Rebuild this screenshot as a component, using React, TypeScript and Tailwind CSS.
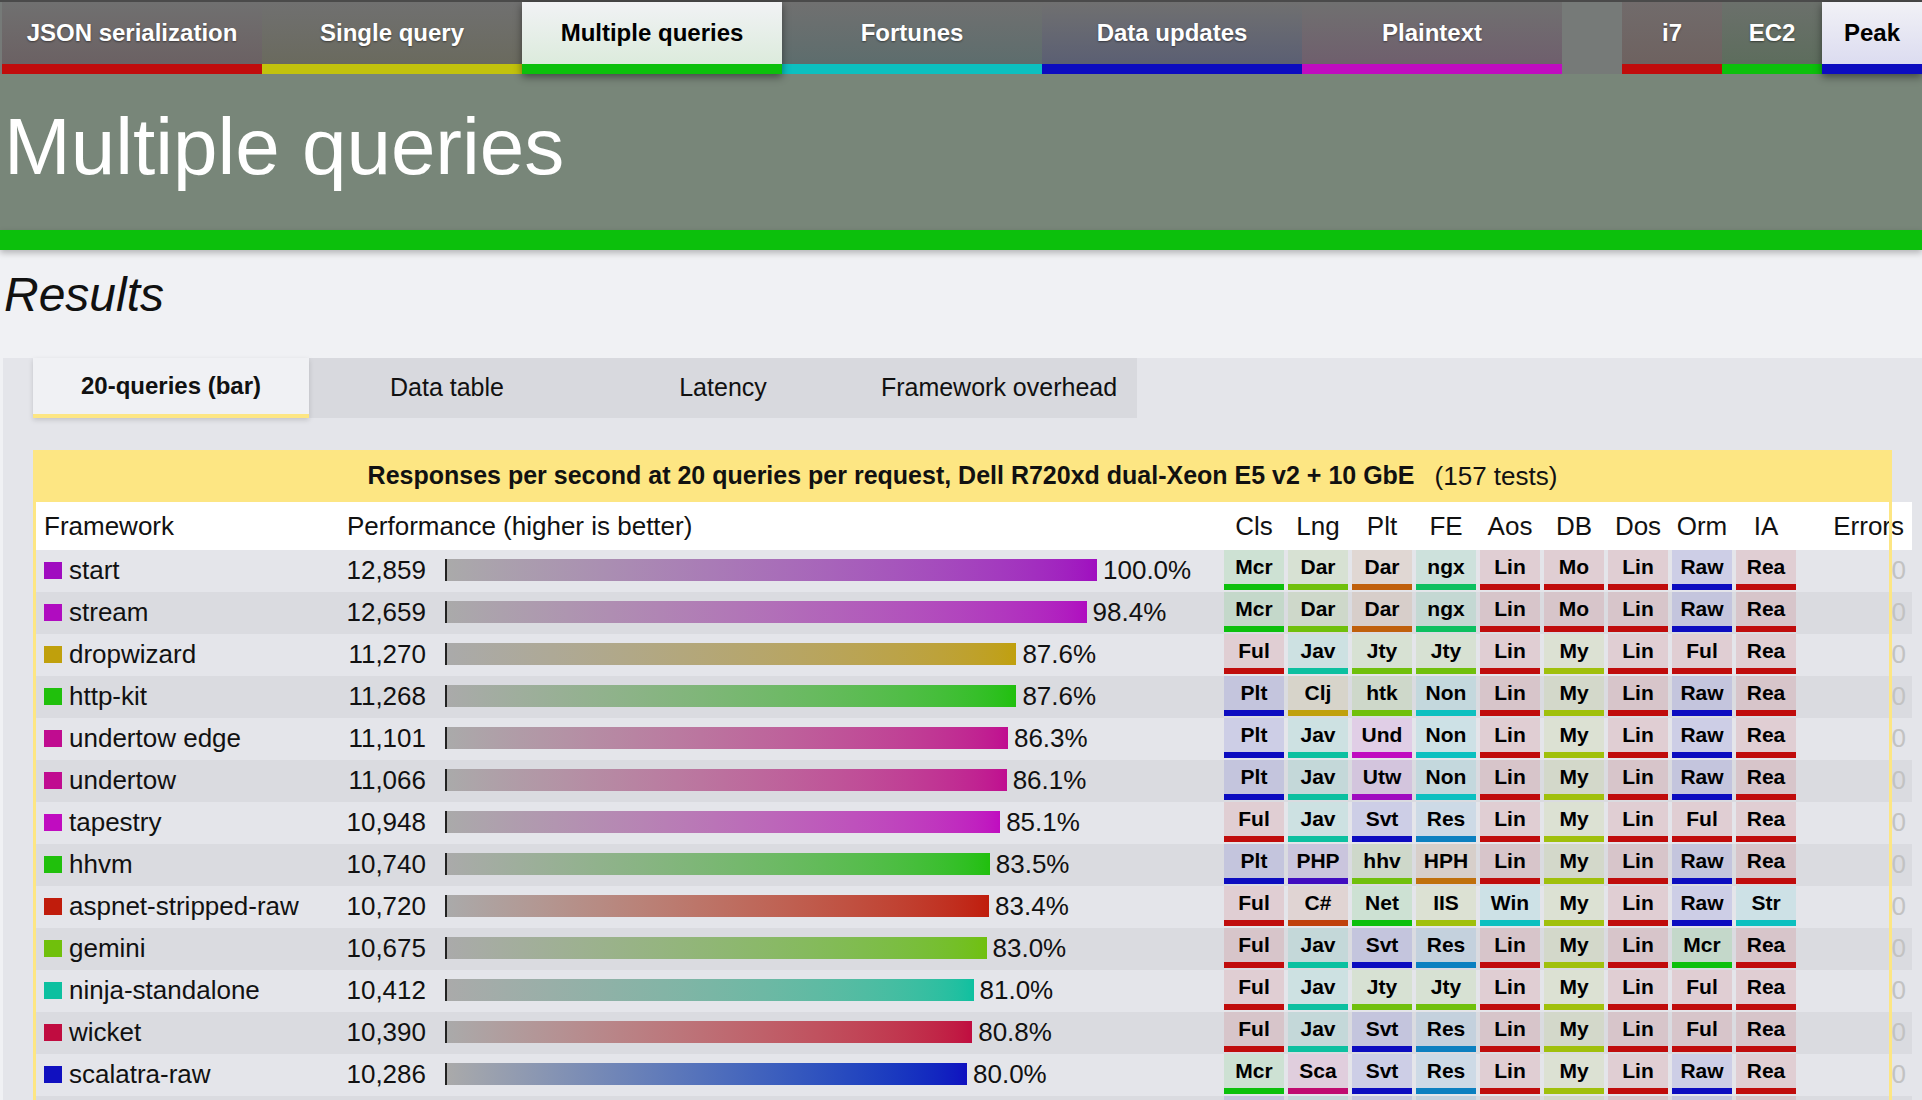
import React from "react";

type Tone = { solid: string; soft: string; grad: string };

const tones: Record<string, Tone> = {
  red: { solid: "bg-[#c00c0c]", soft: "bg-[#c00c0c]/10", grad: "to-[#c00c0c]" },
  green: { solid: "bg-[#0cc00c]", soft: "bg-[#0cc00c]/10", grad: "to-[#0cc00c]" },
  lime: { solid: "bg-[#70c00c]", soft: "bg-[#70c00c]/10", grad: "to-[#70c00c]" },
  orange: { solid: "bg-[#c0600c]", soft: "bg-[#c0600c]/10", grad: "to-[#c0600c]" },
  sea: { solid: "bg-[#0cc060]", soft: "bg-[#0cc060]/10", grad: "to-[#0cc060]" },
  blue: { solid: "bg-[#0c0cc0]", soft: "bg-[#0c0cc0]/10", grad: "to-[#0c0cc0]" },
  teal: { solid: "bg-[#0cc0a0]", soft: "bg-[#0cc0a0]/10", grad: "to-[#0cc0a0]" },
  gold: { solid: "bg-[#c0a00c]", soft: "bg-[#c0a00c]/10", grad: "to-[#c0a00c]" },
  olive: { solid: "bg-[#a0c00c]", soft: "bg-[#a0c00c]/10", grad: "to-[#a0c00c]" },
  magenta: { solid: "bg-[#c00cc0]", soft: "bg-[#c00cc0]/10", grad: "to-[#c00cc0]" },
  cyan: { solid: "bg-[#0cc0c0]", soft: "bg-[#0cc0c0]/10", grad: "to-[#0cc0c0]" },
  purple: { solid: "bg-[#a00cc0]", soft: "bg-[#a00cc0]/10", grad: "to-[#a00cc0]" },
  violet: { solid: "bg-[#b00cc0]", soft: "bg-[#b00cc0]/10", grad: "to-[#b00cc0]" },
  steel: { solid: "bg-[#0c80c0]", soft: "bg-[#0c80c0]/10", grad: "to-[#0c80c0]" },
  indigo: { solid: "bg-[#400cc0]", soft: "bg-[#400cc0]/10", grad: "to-[#400cc0]" },
  amber: { solid: "bg-[#c0700c]", soft: "bg-[#c0700c]/10", grad: "to-[#c0700c]" },
  rust: { solid: "bg-[#c0400c]", soft: "bg-[#c0400c]/10", grad: "to-[#c0400c]" },
  pink: { solid: "bg-[#c00c70]", soft: "bg-[#c00c70]/10", grad: "to-[#c00c70]" },
  rose: { solid: "bg-[#c00c90]", soft: "bg-[#c00c90]/10", grad: "to-[#c00c90]" },
  crimson: { solid: "bg-[#c00c40]", soft: "bg-[#c00c40]/10", grad: "to-[#c00c40]" },
  grass: { solid: "bg-[#20c00c]", soft: "bg-[#20c00c]/10", grad: "to-[#20c00c]" },
  scarlet: { solid: "bg-[#c01c0c]", soft: "bg-[#c01c0c]/10", grad: "to-[#c01c0c]" },
  royal: { solid: "bg-[#1010c0]", soft: "bg-[#1010c0]/10", grad: "to-[#1010c0]" },
};

// badge label -> tone
const B: Record<string, string> = {
  Mcr: "green", Ful: "red", Plt: "blue",
  Dar: "lime", Jav: "teal", Clj: "gold", PHP: "indigo", "C#": "rust", Sca: "pink",
  DarP: "orange", Jty: "lime", htk: "lime", Und: "magenta", Utw: "purple", Svt: "blue", hhv: "lime", Net: "green",
  ngx: "sea", Non: "cyan", Res: "steel", HPH: "amber", IIS: "olive",
  Lin: "red", Win: "cyan", Mo: "red", My: "olive",
  Raw: "blue", Rea: "red", Str: "cyan",
};

type Row = { name: string; tone: string; rps: string; pct: number; badges: string[] };

const rows: Row[] = [
  { name: "start", tone: "purple", rps: "12,859", pct: 100.0, badges: ["Mcr", "Dar", "DarP", "ngx", "Lin", "Mo", "Lin", "Raw", "Rea"] },
  { name: "stream", tone: "violet", rps: "12,659", pct: 98.4, badges: ["Mcr", "Dar", "DarP", "ngx", "Lin", "Mo", "Lin", "Raw", "Rea"] },
  { name: "dropwizard", tone: "gold", rps: "11,270", pct: 87.6, badges: ["Ful", "Jav", "Jty", "Jty", "Lin", "My", "Lin", "Ful", "Rea"] },
  { name: "http-kit", tone: "grass", rps: "11,268", pct: 87.6, badges: ["Plt", "Clj", "htk", "Non", "Lin", "My", "Lin", "Raw", "Rea"] },
  { name: "undertow edge", tone: "rose", rps: "11,101", pct: 86.3, badges: ["Plt", "Jav", "Und", "Non", "Lin", "My", "Lin", "Raw", "Rea"] },
  { name: "undertow", tone: "rose", rps: "11,066", pct: 86.1, badges: ["Plt", "Jav", "Utw", "Non", "Lin", "My", "Lin", "Raw", "Rea"] },
  { name: "tapestry", tone: "magenta", rps: "10,948", pct: 85.1, badges: ["Ful", "Jav", "Svt", "Res", "Lin", "My", "Lin", "Ful", "Rea"] },
  { name: "hhvm", tone: "grass", rps: "10,740", pct: 83.5, badges: ["Plt", "PHP", "hhv", "HPH", "Lin", "My", "Lin", "Raw", "Rea"] },
  { name: "aspnet-stripped-raw", tone: "scarlet", rps: "10,720", pct: 83.4, badges: ["Ful", "C#", "Net", "IIS", "Win", "My", "Lin", "Raw", "Str"] },
  { name: "gemini", tone: "lime", rps: "10,675", pct: 83.0, badges: ["Ful", "Jav", "Svt", "Res", "Lin", "My", "Lin", "Mcr", "Rea"] },
  { name: "ninja-standalone", tone: "teal", rps: "10,412", pct: 81.0, badges: ["Ful", "Jav", "Jty", "Jty", "Lin", "My", "Lin", "Ful", "Rea"] },
  { name: "wicket", tone: "crimson", rps: "10,390", pct: 80.8, badges: ["Ful", "Jav", "Svt", "Res", "Lin", "My", "Lin", "Ful", "Rea"] },
  { name: "scalatra-raw", tone: "royal", rps: "10,286", pct: 80.0, badges: ["Mcr", "Sca", "Svt", "Res", "Lin", "My", "Lin", "Raw", "Rea"] },
  { name: "servlet-raw", tone: "teal", rps: "10,190", pct: 79.2, badges: ["Plt", "Jav", "Svt", "Res", "Lin", "My", "Lin", "Raw", "Rea"] },
];

const navTabs = [
  { label: "JSON serialization", bg: "from-[#707070] to-[#6b6163]", bar: "bg-[#c00c0c]", w: "w-[260px]" },
  { label: "Single query", bg: "from-[#707070] to-[#6a6a5e]", bar: "bg-[#c2c20c]", w: "w-[260px]" },
  { label: "Multiple queries", bg: "from-[#f1f2f5] to-[#dcebdc]", bar: "bg-[#0cc00c]", w: "w-[260px]", active: true },
  { label: "Fortunes", bg: "from-[#707070] to-[#5d6d6d]", bar: "bg-[#0cc0c0]", w: "w-[260px]" },
  { label: "Data updates", bg: "from-[#707070] to-[#5b5f73]", bar: "bg-[#0c0cc0]", w: "w-[260px]" },
  { label: "Plaintext", bg: "from-[#707070] to-[#6f5f6d]", bar: "bg-[#c00cc0]", w: "w-[260px]" },
];

const hwTabs = [
  { label: "i7", bg: "from-[#716b6b] to-[#6e6260]", bar: "bg-[#c00c0c]", w: "w-[100px]" },
  { label: "EC2", bg: "from-[#6b706b] to-[#5d6d5d]", bar: "bg-[#0cc00c]", w: "w-[100px]" },
  { label: "Peak", bg: "from-[#f1f1f6] to-[#dcdcf0]", bar: "bg-[#0c0cc0]", w: "w-[100px]", active: true },
];

const cols = ["Cls", "Lng", "Plt", "FE", "Aos", "DB", "Dos", "Orm", "IA"];

function NavTab({ t }: { t: { label: string; bg: string; bar: string; w: string; active?: boolean } }) {
  return (
    <div
      className={`${t.w} flex flex-col ${
        t.active ? "relative z-10 shadow-[0_3px_8px_rgba(0,0,0,0.45)]" : ""
      }`}
    >
      <div
        className={`flex-1 flex items-center justify-center bg-linear-to-b ${t.bg} text-[24px] font-bold ${
          t.active ? "text-black" : "text-white [text-shadow:0_1px_2px_rgba(0,0,0,0.45)]"
        }`}
      >
        {t.label}
      </div>
      <div className={`h-[10px] ${t.bar}`} />
    </div>
  );
}

function Badge({ label }: { label: string }) {
  const tone = tones[B[label]];
  const text = label === "DarP" ? "Dar" : label;
  return (
    <div className={`w-[60px] h-[40px] flex flex-col ${tone.soft}`}>
      <div className="flex-1 flex items-center justify-center text-[21px] font-bold text-black">{text}</div>
      <div className={`h-[6px] ${tone.solid}`} />
    </div>
  );
}

export default function App() {
  return (
    <div className="h-[1100px] overflow-hidden bg-[#f0f1f4] font-['Liberation_Sans',Arial,sans-serif] text-[#111]">
      {/* top navigation */}
      <div className="h-[74px] pl-[2px] flex bg-[#767a78] border-t-2 border-[#4a4a4a]">
        {navTabs.map((t) => (
          <NavTab key={t.label} t={t} />
        ))}
        <div className="w-[60px]" />
        {hwTabs.map((t) => (
          <NavTab key={t.label} t={t} />
        ))}
      </div>

      {/* page header */}
      <div className="h-[156px] bg-[#788679] pl-[4px] pt-[33px]">
        <h1 className="text-[80px] leading-none text-white">Multiple queries</h1>
      </div>
      <div className="h-[20px] bg-[#0cc00c] shadow-[0_3px_6px_rgba(0,0,0,0.25)] relative" />

      {/* results */}
      <div className="h-[108px] pt-[21px] pl-[4px]">
        <h2 className="text-[48px] leading-none italic">Results</h2>
      </div>

      <div className="ml-[3px] h-full bg-[#e4e5ea]">
        {/* view tabs */}
        <div className="ml-[30px] w-[1104px] h-[60px] flex bg-[#d8d9de] text-[25px]">
          <div className="w-[276px] flex items-center justify-center bg-[#f0f1f4] border-b-4 border-[#fde683] font-bold text-[24px] shadow-[0_2px_5px_rgba(0,0,0,0.15)] relative">
            20-queries (bar)
          </div>
          <div className="w-[276px] flex items-center justify-center">Data table</div>
          <div className="w-[276px] flex items-center justify-center">Latency</div>
          <div className="w-[276px] flex items-center justify-center">Framework overhead</div>
        </div>

        {/* chart box */}
        <div className="relative ml-[30px] mt-[32px] w-[1859px] bg-[#fde683]">
          <div className="h-[52px] flex items-center justify-center">
            <span className="text-[25px] font-bold">
              Responses per second at 20 queries per request, Dell R720xd dual-Xeon E5 v2 + 10 GbE
            </span>
            <span className="ml-[20px] text-[26px]">(157 tests)</span>
          </div>

          <div className="ml-[3px] w-[1876px] text-[26px]">
            <div className="h-[48px] flex items-center bg-white">
              <div className="w-[300px] pl-2">Framework</div>
              <div className="w-[888px] pl-[11px]">Performance (higher is better)</div>
              <div className="flex gap-1">
                {cols.map((c) => (
                  <div key={c} className="w-[60px] text-center">
                    {c}
                  </div>
                ))}
              </div>
              <div className="flex-1 text-right pr-2">Errors</div>
            </div>

            {rows.map((r, i) => {
              const tone = tones[r.tone];
              return (
                <div
                  key={r.name}
                  className={`h-[42px] flex items-start ${i % 2 === 0 ? "bg-[#e4e5ea]" : "bg-[#dadbe0]"}`}
                >
                  <div className="w-[300px] h-[40px] pl-2 flex items-center gap-[7px]">
                    <div className={`w-[18px] h-[17px] ${tone.solid}`} />
                    <span>{r.name}</span>
                  </div>
                  <div className="w-[90px] h-[40px] flex items-center justify-end">{r.rps}</div>
                  <div className="w-[798px] h-[40px] pl-[19px] flex items-center">
                    <div className="w-[2px] h-[22px] bg-[#222]" />
                    <div
                      className={`h-[22px] bg-linear-to-r from-[#aaaaaa] ${tone.grad}`}
                      style={{ width: `${(r.pct / 100) * 650}px` }}
                    />
                    <span className="ml-[6px]">{r.pct.toFixed(1)}%</span>
                  </div>
                  <div className="flex gap-1">
                    {r.badges.map((b, j) => (
                      <Badge key={j} label={b} />
                    ))}
                  </div>
                  <div className="flex-1 h-[40px] flex items-center justify-end pr-[6px] text-[#c2c2c2]">0</div>
                </div>
              );
            })}
          </div>

          <div className="pointer-events-none absolute inset-y-0 left-0 right-0 border-x-[3px] border-[#fde683]" />
        </div>
      </div>
    </div>
  );
}
